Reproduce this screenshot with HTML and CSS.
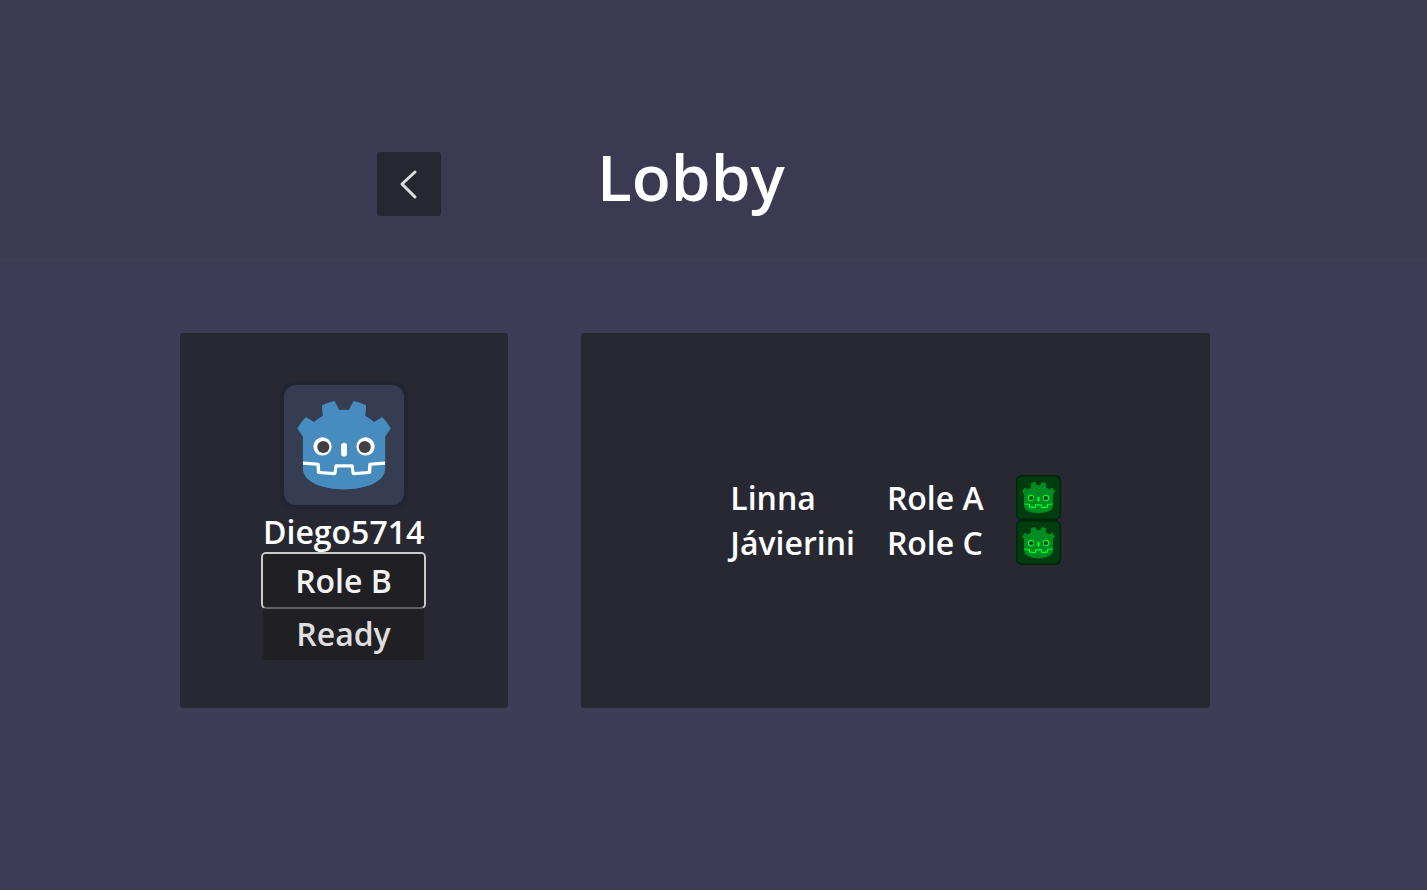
FILE: index.html
```html
<!DOCTYPE html>
<html lang="en">
<head>
    <meta charset="UTF-8">
    <meta name="viewport" content="width=device-width, initial-scale=1.0">
    <title>Lobby</title>
    <link rel="stylesheet" href="styles.css">
</head>
<body>
    <svg class="symbols" aria-hidden="true">
        <symbol id="robot" viewBox="0 0 128 128">
            <rect class="tile" x="2" y="2" width="124" height="124" rx="14" stroke-width="4"/>
            <g transform="scale(.101) translate(122 122)">
                <path class="light" d="M105 673v33q407 354 814 0v-33z"/>
                <path class="face" d="m105 673 152 14q12 1 15 14l4 67 132 10 8-61q2-11 15-15h162q13 4 15 15l8 61 132-10 4-67q3-13 15-14l152-14V427q30-39 56-81-35-59-83-108-43 20-82 47-40-37-88-64 7-51 8-102-59-28-123-42-26 43-46 89-49-7-98 0-20-46-46-89-64 14-123 42 1 51 8 102-48 27-88 64-39-27-82-47-48 49-83 108 26 42 56 81zm0 33v39c0 276 813 276 814 0v-39l-134 12-5 69q-2 10-14 13l-162 11q-12 0-16-11l-10-65H446l-10 65q-4 11-16 11l-162-11q-12-3-14-13l-5-69z"/>
                <path class="light" d="M483 600c0 34 58 34 58 0v-86c0-34-58-34-58 0z"/>
                <circle class="light" cx="725" cy="526" r="90"/>
                <circle class="light" cx="299" cy="526" r="90"/>
                <circle class="pupil" cx="307" cy="532" r="60"/>
                <circle class="pupil" cx="717" cy="532" r="60"/>
            </g>
        </symbol>
    </svg>

    <header class="header">
        <button class="button back" type="button" aria-label="Back">
            <svg width="64" height="64" viewBox="0 0 64 64"><path d="M38 20 25 32 38 45"/></svg>
        </button>
        <h1 class="title">Lobby</h1>
    </header>

    <main class="lobby">
        <section class="panel">
            <div class="player">
                <svg class="avatar"><use href="#robot"/></svg>
                <div class="player-name">Diego5714</div>
                <button class="button role" type="button">Role B</button>
                <button class="button" type="button">Ready</button>
            </div>
        </section>
        <section class="panel">
            <table class="members">
                <tr>
                    <td>Linna</td>
                    <td>Role A</td>
                    <td><svg class="status"><use href="#robot"/></svg></td>
                </tr>
                <tr>
                    <td>Jávierini</td>
                    <td>Role C</td>
                    <td><svg class="status"><use href="#robot"/></svg></td>
                </tr>
            </table>
        </section>
    </main>
</body>
</html>
```
FILE: styles.css
```css
* {
    box-sizing: border-box;
}
body {
    margin: 0;
    min-height: 100vh;
    background: #3e3d58;
    border-bottom: 2px solid #3b3a52;
    color: #fff;
    font: 600 32px/45px "Open Sans", sans-serif;
}
.symbols {
    position: absolute;
    width: 0;
    height: 0;
}

.header {
    display: grid;
    grid-template-columns: 64px auto;
    justify-content: start;
    column-gap: 156px;
    height: 258px;
    padding: 152px 0 0 377px;
    background: #3b3a52;
}
.title {
    margin: 0;
    font-size: 64px;
    font-weight: 600;
    line-height: 50px;
}

.button {
    padding: 4px;
    border: none;
    border-radius: 3px;
    background: rgba(26, 26, 26, 0.6);
    color: #dfdfdf;
    font: inherit;
    cursor: pointer;
}
.back {
    width: 64px;
    height: 64px;
    padding: 0;
}
.back svg {
    display: block;
    fill: none;
    stroke: #dfdfdf;
    stroke-width: 3;
    stroke-linecap: round;
    stroke-linejoin: round;
}
.role {
    color: #f2f2f2;
    box-shadow: 0 0 0 2px #cacacb;
}

.lobby {
    display: grid;
    grid-template-columns: 328fr 629fr;
    column-gap: 73px;
    padding: 75px 217px 75px 180px;
}
.panel {
    display: flex;
    align-items: center;
    justify-content: center;
    min-height: 375px;
    border-radius: 3px;
    background: rgba(26, 26, 26, 0.6);
}
.player {
    display: flex;
    flex-direction: column;
    width: 162px;
    padding-right: 1px;
}
.player-name {
    white-space: nowrap;
}
.avatar {
    align-self: center;
    width: 128px;
    height: 128px;
    --tile: #363d52;
    --edge: #212532;
    --face: #478cbf;
    --light: #fff;
    --pupil: #414042;
}

.members {
    margin-bottom: 1px;
    border-collapse: collapse;
}
.members td {
    padding: 0 32px 0 0;
}
.members td:last-child {
    padding: 0;
}
.status {
    display: block;
    width: 45px;
    height: 45px;
    --tile: #003d0e;
    --edge: #002509;
    --face: #008c21;
    --light: #00ff2c;
    --pupil: #00400b;
}

.tile {
    fill: var(--tile);
    stroke: var(--edge);
}
.face {
    fill: var(--face);
}
.light {
    fill: var(--light);
}
.pupil {
    fill: var(--pupil);
}
```
